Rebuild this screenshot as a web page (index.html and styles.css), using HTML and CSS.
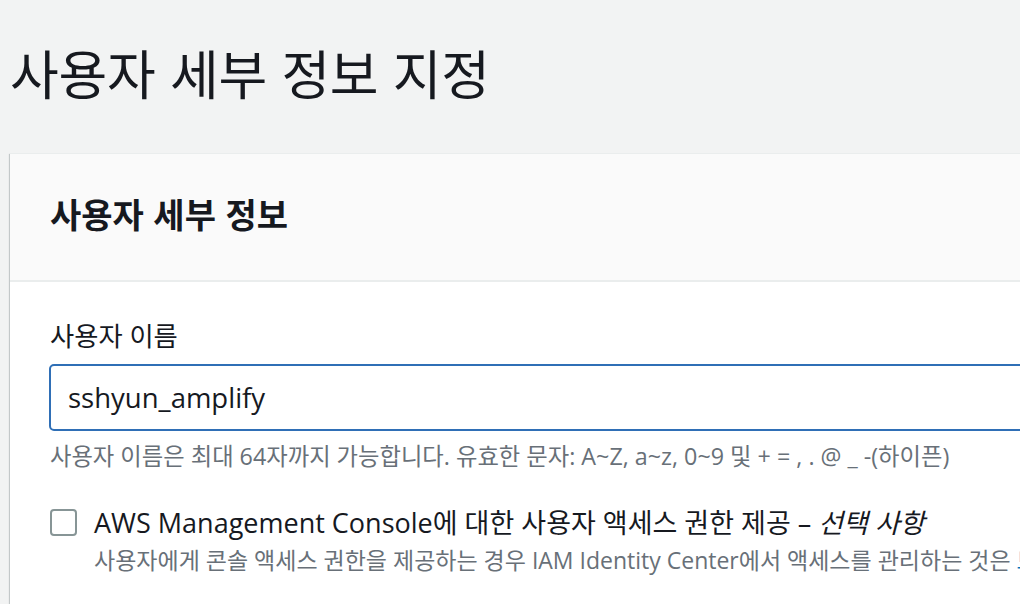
FILE: index.html
```html
<!DOCTYPE html>
<html lang="ko">
<head>
<meta charset="utf-8">
<link rel="stylesheet" href="styles.css">
</head>
<body>
<div class="page">
  <h1 class="page-title">사용자 세부 정보 지정</h1>
  <section class="card">
    <div class="card-header">
      <h2 class="card-title">사용자 세부 정보</h2>
    </div>
    <div class="card-body">
      <label class="field-label" for="username">사용자 이름</label>
      <div class="input-box"><input id="username" class="text-input" type="text" value="sshyun_amplify"></div>
      <p class="hint">사용자 이름은 최대 64자까지 가능합니다. 유효한 문자: A~Z, a~z, 0~9 및 + = , . @ _ -(하이픈)</p>
      <div class="check-row">
        <span class="checkbox"></span>
        <div class="check-text">
          <div class="check-label">AWS Management Console에 대한 사용자 액세스 권한 제공 – <em class="optional">선택 사항</em></div>
          <div class="check-desc">사용자에게 콘솔 액세스 권한을 제공하는 경우 IAM Identity Center에서 액세스를 관리하는 것은 <a class="link" href="#">모범 사례입니다.</a></div>
        </div>
      </div>
    </div>
  </section>
</div>
</body>
</html>
```

FILE: styles.css
```css
html, body {
  margin: 0;
  padding: 0;
}
body {
  background: #f2f3f3;
  font-family: "Open Sans", "Noto Sans CJK KR", sans-serif;
  color: #16191f;
  width: 1020px;
  height: 604px;
  overflow: hidden;
}
.page {
  padding-left: 10px;
}
.page-title {
  margin: 0;
  padding-top: 36px;
  height: 115px;
  box-sizing: border-box;
  font-family: "Noto Sans CJK KR", sans-serif;
  font-weight: 400;
  font-size: 53px;
  line-height: 72px;
  letter-spacing: -0.3px;
  white-space: nowrap;
}
.card {
  width: 1100px;
  height: 489px;
  background: #ffffff;
  box-shadow: 0 1px 1px 0 rgba(0, 28, 36, 0.3), 1px 1px 1px 0 rgba(0, 28, 36, 0.15), -1px 1px 1px 0 rgba(0, 28, 36, 0.15);
  border-top: 1px solid #eaeded;
  margin-top: 38px;
}
.card-header {
  background: #fafafa;
  height: 128px;
  box-sizing: border-box;
  border-bottom: 2px solid #eaeded;
  padding-left: 40px;
  display: flex;
  align-items: center;
}
.card-title {
  margin: 0;
  font-family: "Noto Sans CJK KR", sans-serif;
  font-weight: 700;
  font-size: 34px;
  line-height: 44px;
  padding-bottom: 6px;
}
.card-body {
  padding: 36px 0 0 39px;
}
.field-label {
  display: block;
  font-size: 26.3px;
  line-height: 36px;
  margin-left: 1px;
  margin-bottom: 10px;
}
.input-box {
  height: 67px;
  box-sizing: border-box;
  border: 2px solid #2f6fb6;
  border-radius: 5px;
  display: flex;
  align-items: center;
  padding-left: 17px;
}
.text-input {
  border: 0;
  outline: none;
  background: transparent;
  font-family: "Open Sans", sans-serif;
  font-size: 27.5px;
  color: #16191f;
  width: 100%;
  padding: 0;
}
.hint {
  margin: 9px 0 0 1px;
  font-size: 23.3px;
  line-height: 32px;
  color: #687078;
  white-space: nowrap;
}
.check-row {
  display: flex;
  align-items: flex-start;
  margin-top: 33px;
  margin-left: 1px;
}
.checkbox {
  flex: none;
  width: 27px;
  height: 27px;
  box-sizing: border-box;
  border: 2px solid #879596;
  border-radius: 4px;
  margin-top: 4px;
  margin-right: 17px;
}
.check-text {
  white-space: nowrap;
}
.check-label {
  font-size: 27px;
  line-height: 36px;
}
.optional {
  font-style: italic;
}
.check-desc {
  font-size: 23px;
  line-height: 38px;
  color: #687078;
}
.link {
  color: #0073bb;
  text-decoration: none;
}
```
